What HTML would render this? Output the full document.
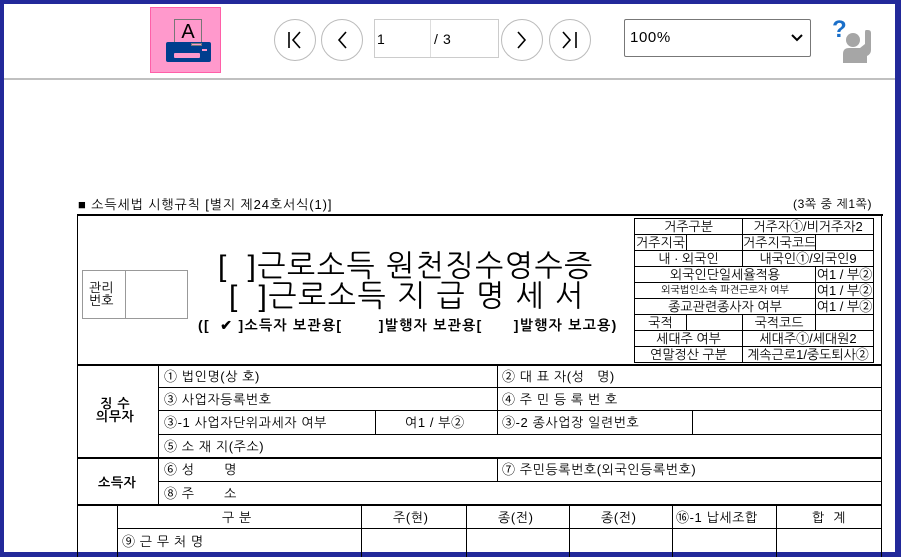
<!DOCTYPE html>
<html><head><meta charset="utf-8"><style>
*{margin:0;padding:0;box-sizing:border-box}
body{width:901px;height:557px;overflow:hidden;background:#fff;position:relative;font-family:"Liberation Sans","NanumGothic","Noto Sans CJK KR",sans-serif;font-size:13px;color:#000}
.a{position:absolute}
.hl{position:absolute;height:1px;background:#000}
.vl{position:absolute;width:1px;background:#000}
.t{position:absolute;white-space:nowrap;line-height:1;letter-spacing:0.6px}
.circ{position:absolute;width:42px;height:42px;border:1.5px solid #bbb;border-radius:50%;background:#fff}
.st td{border:1px solid #000;text-align:center;font-size:13px;line-height:14px;padding:0;white-space:nowrap;overflow:hidden}
</style></head><body>
<div class="a" style="left:0;top:0;width:901px;height:4px;background:#22299a"></div>
<div class="a" style="left:0;top:0;width:4px;height:557px;background:#22299a"></div>
<div class="a" style="right:0;top:0;width:6px;height:557px;background:#22299a"></div>
<div class="a" style="left:0;bottom:0;width:901px;height:5px;background:#22299a"></div>
<div class="a" style="left:4px;top:78px;width:891px;height:2px;background:#c0c0c0"></div>

<div class="a" style="left:150px;top:7px;width:71px;height:66px;background:#ff99cc;border:1px solid #ff5fa8"></div>
<div class="a" style="left:174px;top:19px;width:28px;height:26px;border:1px solid #777;background:#ff99cc;font-size:20px;line-height:24px;text-align:center">A</div>
<div class="a" style="left:166px;top:42px;width:45px;height:20px;background:#003e8e;border-radius:2px"></div>
<div class="a" style="left:174px;top:53px;width:26px;height:5px;background:#ff99cc;border-radius:1px"></div>
<div class="a" style="left:202px;top:49px;width:5px;height:2px;background:#ff99cc"></div>
<div class="a" style="left:191px;top:43px;width:11px;height:3px;background:#ff99cc;border:1px solid #777"></div>

<div class="circ" style="left:274px;top:19px"></div>
<div class="circ" style="left:321px;top:19px"></div>
<div class="circ" style="left:501px;top:19px"></div>
<div class="circ" style="left:549px;top:19px"></div>
<svg class="a" style="left:274px;top:19px" width="42" height="42"><path d="M15 13V29M26 13L19 21L26 29" stroke="#000" stroke-width="1.6" fill="none"/></svg>
<svg class="a" style="left:321px;top:19px" width="42" height="42"><path d="M25 13L18 21L25 29" stroke="#000" stroke-width="1.6" fill="none"/></svg>
<svg class="a" style="left:501px;top:19px" width="42" height="42"><path d="M17 13L24 21L17 29" stroke="#000" stroke-width="1.6" fill="none"/></svg>
<svg class="a" style="left:549px;top:19px" width="42" height="42"><path d="M14 13L21 21L14 29M27 13V29" stroke="#000" stroke-width="1.6" fill="none"/></svg>
<div class="a" style="left:374px;top:19px;width:125px;height:39px;border:1px solid #ccc"></div>
<div class="a" style="left:430px;top:20px;width:1px;height:37px;background:#ddd"></div>
<div class="t" style="left:377px;top:32px;font-size:14px">1</div>
<div class="t" style="left:434px;top:32px;font-size:14px">/ 3</div>

<div class="a" style="left:624px;top:19px;width:187px;height:38px;border:1px solid #777;border-radius:2px"></div>
<div class="t" style="left:630px;top:30px;font-size:15px">100%</div>
<svg class="a" style="left:791px;top:33px" width="12" height="10"><path d="M1 2L6 7L11 2" stroke="#000" stroke-width="2" fill="none"/></svg>

<div class="t" style="left:832px;top:18px;font-size:24px;font-weight:bold;color:#1a6fc9">?</div>
<svg class="a" style="left:840px;top:30px" width="40" height="34"><circle cx="13" cy="10" r="7" fill="#a6a6a6"/><path d="M3 33V24Q3 18 9 18H20L25 14V2Q25 -1 28 0 31 0 31 3V20Q31 24 27 26V33Z" fill="#a6a6a6"/></svg>

<div class="t" style="left:78px;top:198px;font-size:13px;letter-spacing:0.9px">■ 소득세법 시행규칙 [별지 제24호서식(1)]</div>
<div class="t" style="left:793px;top:198px;font-size:12px">(3쪽 중 제1쪽)</div>

<div class="a" style="left:77px;top:214px;width:806px;height:2px;background:#000"></div>
<div class="vl" style="left:77px;top:214px;height:343px"></div>
<div class="vl" style="left:881px;top:214px;height:343px"></div>

<div class="a" style="left:82px;top:270px;width:106px;height:49px;border:1px solid #999"></div>
<div class="a" style="left:125px;top:270px;width:1px;height:49px;background:#999"></div>
<div class="t" style="left:89px;top:281px;font-size:13px;line-height:13px;text-align:center;letter-spacing:0">관리<br>번호</div>

<div class="t" style="left:218px;top:252px;font-size:30px;letter-spacing:1.5px">[&nbsp;&nbsp;]근로소득 원천징수영수증</div>
<div class="t" style="left:229px;top:282px;font-size:30px;letter-spacing:1.5px">[&nbsp;&nbsp;]근로소득 지 급 명 세 서</div>
<div class="t" style="left:198px;top:318px;font-size:14px;font-weight:bold;letter-spacing:1.3px">([ &nbsp;✔ ]소득자 보관용[ &nbsp;&nbsp;&nbsp;&nbsp;&nbsp;&nbsp;]발행자 보관용[ &nbsp;&nbsp;&nbsp;&nbsp;&nbsp;]발행자 보고용)</div>

<table class="st a" style="left:634px;top:218px;width:239px;border-collapse:collapse;table-layout:fixed">
<colgroup><col style="width:52px"><col style="width:56px"><col style="width:48px"><col style="width:25px"><col style="width:58px"></colgroup>
<tr style="height:16px"><td colspan="2">거주구분</td><td colspan="3">거주자①/비거주자2</td></tr>
<tr style="height:16px"><td>거주지국</td><td></td><td colspan="2">거주지국코드</td><td></td></tr>
<tr style="height:16px"><td colspan="2">내 · 외국인</td><td colspan="3">내국인①/외국인9</td></tr>
<tr style="height:16px"><td colspan="4">외국인단일세율적용</td><td>여1 / 부②</td></tr>
<tr style="height:16px"><td colspan="4" style="font-size:10px">외국법인소속 파견근로자 여부</td><td>여1 / 부②</td></tr>
<tr style="height:16px"><td colspan="4">종교관련종사자 여부</td><td>여1 / 부②</td></tr>
<tr style="height:16px"><td>국적</td><td></td><td colspan="2">국적코드</td><td></td></tr>
<tr style="height:16px"><td colspan="2">세대주 여부</td><td colspan="3">세대주①/세대원2</td></tr>
<tr style="height:16px"><td colspan="2">연말정산 구분</td><td colspan="3">계속근로1/중도퇴사②</td></tr>
</table>

<div class="a" style="left:77px;top:364px;width:805px;height:2px;background:#000"></div>
<div class="hl" style="left:158px;top:387px;width:724px"></div>
<div class="hl" style="left:158px;top:410px;width:724px"></div>
<div class="hl" style="left:158px;top:434px;width:724px"></div>
<div class="a" style="left:77px;top:457px;width:805px;height:2px;background:#000"></div>
<div class="hl" style="left:158px;top:481px;width:724px"></div>
<div class="a" style="left:77px;top:504px;width:805px;height:2px;background:#000"></div>
<div class="hl" style="left:117px;top:528px;width:765px"></div>
<div class="vl" style="left:158px;top:364px;height:141px"></div>
<div class="vl" style="left:497px;top:364px;height:70px"></div>
<div class="vl" style="left:375px;top:410px;height:24px"></div>
<div class="vl" style="left:692px;top:410px;height:24px"></div>
<div class="vl" style="left:497px;top:458px;height:23px"></div>
<div class="vl" style="left:117px;top:505px;height:52px"></div>
<div class="vl" style="left:361px;top:505px;height:52px"></div>
<div class="vl" style="left:466px;top:505px;height:52px"></div>
<div class="vl" style="left:569px;top:505px;height:52px"></div>
<div class="vl" style="left:672px;top:505px;height:52px"></div>
<div class="vl" style="left:776px;top:505px;height:52px"></div>

<div class="t" style="left:96px;top:397px;font-weight:bold;line-height:13px;text-align:center">징 수<br>의무자</div>
<div class="t" style="left:98px;top:476px;font-weight:bold">소득자</div>
<div class="t" style="left:164px;top:370px">① 법인명(상 호)</div>
<div class="t" style="left:164px;top:393px">③ 사업자등록번호</div>
<div class="t" style="left:164px;top:416px">③-1 사업자단위과세자 여부</div>
<div class="t" style="left:405px;top:416px">여1 / 부②</div>
<div class="t" style="left:164px;top:440px">⑤ 소 재 지(주소)</div>
<div class="t" style="left:164px;top:463px">⑥ 성 &nbsp;&nbsp;&nbsp;&nbsp;&nbsp;&nbsp;명</div>
<div class="t" style="left:164px;top:487px">⑧ 주 &nbsp;&nbsp;&nbsp;&nbsp;&nbsp;&nbsp;소</div>
<div class="t" style="left:502px;top:370px">② 대 표 자(성 &nbsp;&nbsp;명)</div>
<div class="t" style="left:502px;top:393px">④ 주 민 등 록 번 호</div>
<div class="t" style="left:502px;top:416px">③-2 종사업장 일련번호</div>
<div class="t" style="left:502px;top:463px">⑦ 주민등록번호(외국인등록번호)</div>
<div class="t" style="left:222px;top:511px">구 분</div>
<div class="t" style="left:393px;top:511px">주(현)</div>
<div class="t" style="left:498px;top:511px">종(전)</div>
<div class="t" style="left:601px;top:511px">종(전)</div>
<div class="t" style="left:676px;top:511px">⑯-1 납세조합</div>
<div class="t" style="left:812px;top:511px">합 &nbsp;계</div>
<div class="t" style="left:122px;top:535px">⑨ 근 무 처 명</div>
</body></html>
